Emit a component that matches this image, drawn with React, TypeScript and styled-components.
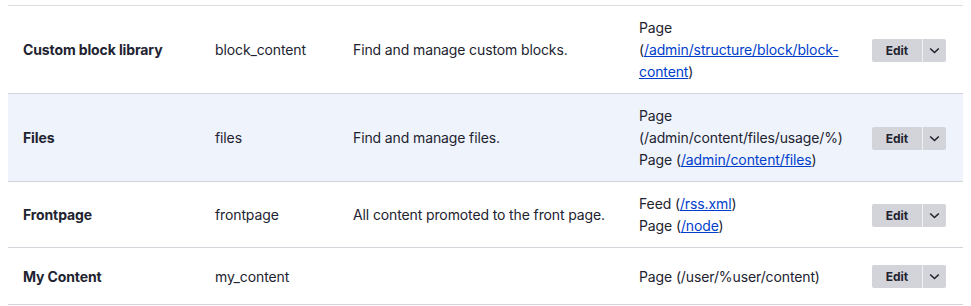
import React from "react";
import styled, { createGlobalStyle } from "styled-components";

const Global = createGlobalStyle`
  html, body { margin: 0; padding: 0; background: #fff; }
  body { font-family: Inter, "Noto Sans", sans-serif; color: #222330; }
`;

const Wrap = styled.div`
  padding: 5px 8px 0 8px;
`;

const Table = styled.table`
  width: 955px;
  border-collapse: collapse;
  table-layout: fixed;
  font-size: 14px;
  line-height: 22px;
  letter-spacing: -0.12px;
  border-top: 1px solid #dcdde2;
`;

const Row = styled.tr<{ $hl?: boolean }>`
  background: ${(p) => (p.$hl ? "#eff3fc" : "#fff")};
  border-bottom: 1px solid #d3d4d9;
`;

const Cell = styled.td<{ $bold?: boolean }>`
  padding: 11px 12px 10px 15px;
  vertical-align: middle;
  font-weight: ${(p) => (p.$bold ? 700 : 400)};
  color: #222330;
`;

const Link = styled.a`
  color: #003ecc;
  text-decoration: underline;
`;

const Drop = styled.div`
  display: flex;
  padding: 6px 0;
`;

const BtnMain = styled.button`
  height: 23px;
  width: 51px;
  border: none;
  background: #d3d4d9;
  border-radius: 2px 0 0 2px;
  font-family: Inter, "Noto Sans", sans-serif;
  font-size: 12px;
  font-weight: 700;
  color: #222330;
  padding: 0;
  border-right: 1px solid #eef0f3;
`;

const BtnToggle = styled.button`
  height: 23px;
  width: 23px;
  border: none;
  background: #d3d4d9;
  border-radius: 0 2px 2px 0;
  padding: 0;
  display: flex;
  align-items: center;
  justify-content: center;
`;

const Chevron = () => (
  <svg width="11" height="7" viewBox="0 0 11 7">
    <path d="M1.2 1.5l4.3 4 4.3-4" fill="none" stroke="#222330" strokeWidth="1.6" />
  </svg>
);

const Dropbutton = () => (
  <Drop>
    <BtnMain>Edit</BtnMain>
    <BtnToggle>
      <Chevron />
    </BtnToggle>
  </Drop>
);

export default function App() {
  return (
    <Wrap>
      <Global />
      <Table>
        <colgroup>
          <col style={{ width: 192 }} />
          <col style={{ width: 138 }} />
          <col style={{ width: 286 }} />
          <col style={{ width: 233 }} />
          <col style={{ width: 106 }} />
        </colgroup>
        <tbody>
          <Row>
            <Cell $bold>Custom block library</Cell>
            <Cell>block_content</Cell>
            <Cell>Find and manage custom blocks.</Cell>
            <Cell>
              Page<br />(<Link href="#">/admin/structure/block/block-<br />content</Link>)
            </Cell>
            <Cell><Dropbutton /></Cell>
          </Row>
          <Row $hl>
            <Cell $bold>Files</Cell>
            <Cell>files</Cell>
            <Cell>Find and manage files.</Cell>
            <Cell>
              Page<br />(/admin/content/files/usage/%)<br />Page (<Link href="#">/admin/content/files</Link>)
            </Cell>
            <Cell><Dropbutton /></Cell>
          </Row>
          <Row>
            <Cell $bold>Frontpage</Cell>
            <Cell>frontpage</Cell>
            <Cell>All content promoted to the front page.</Cell>
            <Cell>
              Feed (<Link href="#">/rss.xml</Link>)<br />Page (<Link href="#">/node</Link>)
            </Cell>
            <Cell><Dropbutton /></Cell>
          </Row>
          <Row>
            <Cell $bold>My Content</Cell>
            <Cell>my_content</Cell>
            <Cell></Cell>
            <Cell>Page (/user/%user/content)</Cell>
            <Cell><Dropbutton /></Cell>
          </Row>
        </tbody>
      </Table>
    </Wrap>
  );
}
